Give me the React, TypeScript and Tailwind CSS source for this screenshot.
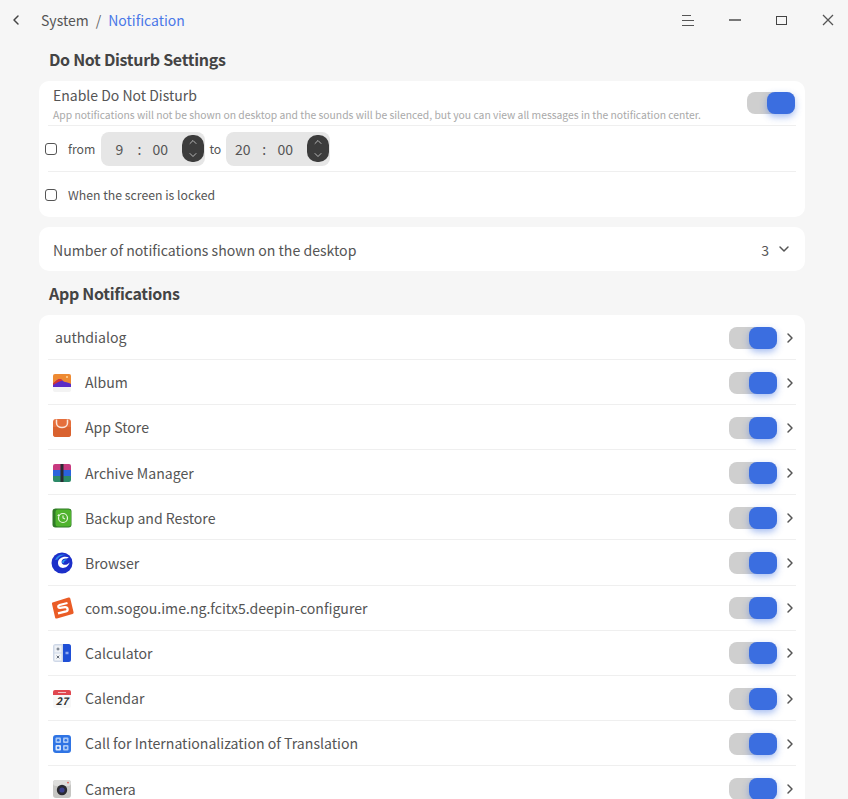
import { ChevronDown, ChevronLeft, ChevronRight, ChevronUp } from 'lucide-react'
import type { ReactNode } from 'react'

function Toggle() {
  return (
    <div className="relative h-[22px] w-[48px] shrink-0 rounded-[8px] bg-[#cfcfcf]">
      <div className="absolute right-0 top-0 h-[22px] w-[28px] rounded-[8px] bg-[#3b6ee0] shadow-[0_3px_7px_rgba(59,110,224,0.45)]" />
    </div>
  )
}

function Checkbox() {
  return <div className="h-[12px] w-[12px] shrink-0 rounded-[3px] border-[1.5px] border-[#555]" />
}

function TimeBox({ hour, hourClass }: { hour: string; hourClass: string }) {
  return (
    <div className="flex h-[34px] w-[104px] items-center rounded-[8px] bg-[#e6e6e6] pr-[1px] text-[14px] text-[#555]">
      <span className={`pt-[2px] text-center ${hourClass}`}>{hour}</span>
      <span className="ml-[2px] w-[4px] pt-[2px] text-center">:</span>
      <span className="ml-[8px] w-[22px] pt-[2px] text-center">00</span>
      <div className="ml-auto flex h-[27px] w-[22px] flex-col items-center justify-center gap-[1px] rounded-[10px] bg-[#3c3c3c] text-[#e8e8e8]">
        <ChevronUp size={12} strokeWidth={1.4} />
        <ChevronDown size={12} strokeWidth={1.4} />
      </div>
    </div>
  )
}

function AlbumIcon() {
  return (
    <svg width="20" height="20" viewBox="0 0 20 20">
      <rect x="1" y="1" width="18" height="18" rx="2" fill="#f3f3f3" />
      <path d="M1 14 V3 a2 2 0 0 1 2 -2 H17 a2 2 0 0 1 2 2 V14 Z" fill="#ee8a32" />
      <path d="M1 14 V10.5 C4 8 6 6 8 6 C10 6 11 9 13 9 C15 9 17 10 19 11 V14 Z" fill="#5b2dc6" />
      <path d="M1 10.5 C4 8 6 6 8 6 C9 6 9.8 6.7 10.5 7.4 C7 8 5 10 1 12 Z" fill="#d9352b" />
      <circle cx="15" cy="4" r="1" fill="#ffd9a0" />
    </svg>
  )
}

function StoreIcon() {
  return (
    <svg width="20" height="20" viewBox="0 0 20 20">
      <rect x="1" y="1" width="18" height="18" rx="3" fill="#e56f3c" />
      <path d="M1 9 H19 V16 a3 3 0 0 1 -3 3 H4 a3 3 0 0 1 -3 -3 Z" fill="#d9622f" />
      <path d="M4.5 1.5 V5 C4.5 11 15.5 11 15.5 5 V1.5" fill="none" stroke="#fbe6da" strokeWidth="1.5" />
    </svg>
  )
}

function ArchiveIcon() {
  return (
    <svg width="20" height="20" viewBox="0 0 20 20">
      <path d="M1 3 a2 2 0 0 1 2 -2 H17 a2 2 0 0 1 2 2 V7 H1 Z" fill="#c7397f" />
      <rect x="1" y="7" width="18" height="6" fill="#2a63dc" />
      <path d="M1 13 H19 V17 a2 2 0 0 1 -2 2 H3 a2 2 0 0 1 -2 -2 Z" fill="#2c8a68" />
      <rect x="8.5" y="1" width="3" height="18" fill="#2b2b33" />
    </svg>
  )
}

function BackupIcon() {
  return (
    <svg width="20" height="20" viewBox="0 0 20 20">
      <rect x="0.5" y="0.5" width="19" height="19" rx="3" fill="#2f7a26" />
      <rect x="3.5" y="1.5" width="15.5" height="17" rx="2.5" fill="#4fb32d" />
      <circle cx="11" cy="10" r="4.5" fill="none" stroke="#e8f6df" strokeWidth="1.2" />
      <path d="M11 7.5 V10 L13 11" fill="none" stroke="#e8f6df" strokeWidth="1.1" />
      <path d="M5.2 8 L6.5 6 L8 8 Z" fill="#e8f6df" />
    </svg>
  )
}

function BrowserIcon() {
  return (
    <svg width="22" height="22" viewBox="0 0 22 22">
      <circle cx="11" cy="11" r="10.5" fill="#1c2fc9" />
      <path d="M4 8 C6 3 11 1.5 15 3 C11 3 8 4.5 6.5 7.5 Z" fill="#2a86ec" />
      <path d="M18 5.5 C13 3.5 7 6 7 11 C7 15.5 12 17.5 16 14.5 C17.5 13.3 18.3 12 18.5 10.5 C16.5 13 13.5 13.5 11.5 12 C9.5 10 11 6.5 14.5 6.5 C16 6.5 17 6 18 5.5 Z" fill="#ffffff" />
      <path d="M11 10 C11.5 8 14 7 16 8 C14.5 8 13 9 13 10.5 C12.8 11.5 11 11.5 11 10 Z" fill="#2a9cf0" />
    </svg>
  )
}

function SogouIcon() {
  return (
    <svg width="24" height="24" viewBox="0 0 24 24">
      <path d="M2.5 6.5 L18.5 1.5 C19.5 1.2 20 1.6 20.3 2.5 L23.5 16 C23.8 17 23.4 17.8 22.5 18 L7 22.5 C6 22.8 5.4 22.4 5.1 21.4 L2 8 C1.8 7.2 2 6.7 2.5 6.5 Z" fill="#ea5c26" />
      <path d="M17.5 7 L9.5 9 C7.5 9.6 8 12 10 11.8 L15 11.2 C18 11 18.5 14.7 16 15.4 L8 17.4" fill="none" stroke="#ffffff" strokeWidth="2.3" />
    </svg>
  )
}

function CalculatorIcon() {
  return (
    <svg width="20" height="20" viewBox="0 0 20 20">
      <rect x="1" y="1" width="18" height="18" rx="2.5" fill="#cfd8e8" />
      <rect x="2.5" y="2.5" width="7" height="7" fill="#eef1f6" />
      <rect x="2.5" y="10.5" width="7" height="7" fill="#f3f5f8" />
      <path d="M11 1 H16.5 A2.5 2.5 0 0 1 19 3.5 V16.5 A2.5 2.5 0 0 1 16.5 19 H11 Z" fill="#1f4fd6" />
      <path d="M4.5 6 H7.5 M6 4.5 V7.5 M4.7 12.7 L7.3 15.3 M7.3 12.7 L4.7 15.3" stroke="#56606e" strokeWidth="0.9" />
      <path d="M13.5 9.3 H16.5 M13.5 10.7 H16.5" stroke="#cfdcff" strokeWidth="0.8" />
    </svg>
  )
}

function CalendarIcon() {
  return (
    <svg width="20" height="20" viewBox="0 0 20 20">
      <rect x="1" y="1" width="18" height="18" rx="2" fill="#f8f8f8" />
      <path d="M1 6 V3 a2 2 0 0 1 2 -2 H17 a2 2 0 0 1 2 2 V6 Z" fill="#e0474f" />
      <rect x="6" y="3" width="8" height="1" fill="#f6c3c5" />
      <text x="10" y="15.8" textAnchor="middle" fontSize="10.5" fontWeight="700" fontStyle="italic" fill="#333">27</text>
    </svg>
  )
}

function TranslateIcon() {
  return (
    <svg width="20" height="20" viewBox="0 0 20 20">
      <rect x="1" y="1" width="18" height="18" rx="3" fill="#2f74e4" />
      <rect x="3.5" y="3.5" width="5.5" height="5.5" rx="1" fill="#a9c8f6" />
      <rect x="11" y="3.5" width="5.5" height="5.5" rx="1" fill="#a9c8f6" />
      <rect x="3.5" y="11" width="5.5" height="5.5" rx="1" fill="#dbe8fb" />
      <rect x="11" y="11" width="5.5" height="5.5" rx="1" fill="#a9c8f6" />
      <circle cx="6.2" cy="6.2" r="1.3" fill="#2f74e4" />
      <circle cx="13.8" cy="6.2" r="1.3" fill="#2f74e4" />
      <circle cx="6.2" cy="13.8" r="1.3" fill="#2f74e4" />
      <circle cx="13.8" cy="13.8" r="1.3" fill="#2f74e4" />
    </svg>
  )
}

function CameraIcon() {
  return (
    <svg width="20" height="20" viewBox="0 0 20 20">
      <rect x="1" y="1" width="18" height="18" rx="3" fill="#c6c6c3" />
      <rect x="1" y="1" width="18" height="6" rx="3" fill="#dededc" />
      <circle cx="10" cy="11" r="5.2" fill="#2a2a30" />
      <circle cx="10" cy="11" r="2.6" fill="#3a3f8f" />
      <circle cx="16" cy="3.6" r="0.9" fill="#e0584f" />
    </svg>
  )
}

function AppRow({ icon, label, last }: { icon?: ReactNode; label: string; last?: boolean }) {
  return (
    <div className={`flex h-[45.1px] items-center pt-[1.5px] ${last ? '' : 'border-b border-[#efefef]'}`}>
      {icon ? (
        <>
          <div className="flex w-[27px] shrink-0 justify-center">{icon}</div>
          <span className="ml-[10px] text-[14.1px] text-[#555]">{label}</span>
        </>
      ) : (
        <span className="ml-[7px] text-[14.1px] text-[#555]">{label}</span>
      )}
      <div className="ml-auto flex items-center">
        <Toggle />
        <ChevronRight size={16} strokeWidth={2.2} className="ml-[5px] mr-[-2px] text-[#555]" />
      </div>
    </div>
  )
}

const apps: { label: string; icon?: ReactNode }[] = [
  { label: 'authdialog' },
  { label: 'Album', icon: <AlbumIcon /> },
  { label: 'App Store', icon: <StoreIcon /> },
  { label: 'Archive Manager', icon: <ArchiveIcon /> },
  { label: 'Backup and Restore', icon: <BackupIcon /> },
  { label: 'Browser', icon: <BrowserIcon /> },
  { label: 'com.sogou.ime.ng.fcitx5.deepin-configurer', icon: <SogouIcon /> },
  { label: 'Calculator', icon: <CalculatorIcon /> },
  { label: 'Calendar', icon: <CalendarIcon /> },
  { label: 'Call for Internationalization of Translation', icon: <TranslateIcon /> },
  { label: 'Camera', icon: <CameraIcon /> },
]

export default function App() {
  return (
    <div className="h-[799px] w-[848px] overflow-hidden bg-[#f6f6f6] font-['Noto_Sans_CJK_SC','Noto_Sans',sans-serif] text-[#555]">
      {/* Title bar */}
      <div className="flex h-[40px] items-center">
        <ChevronLeft size={16} strokeWidth={2.2} className="ml-[8px] text-[#444]" />
        <span className="ml-[17px] text-[14px] text-[#555]">System</span>
        <span className="ml-[7px] text-[14px] text-[#666]">/</span>
        <span className="ml-[7px] text-[14px] text-[#4a78e8]">Notification</span>
        <div className="ml-auto flex items-center text-[#555]">
          <div className="flex w-[12px] flex-col gap-[4px]">
            <div className="h-px w-[9px] bg-[#555]" />
            <div className="h-px w-[12px] bg-[#555]" />
            <div className="h-px w-[12px] bg-[#555]" />
          </div>
          <div className="ml-[35px] h-[1.5px] w-[12px] bg-[#777]" />
          <div className="ml-[35px] h-[9px] w-[11px] border-[1.3px] border-[#444]" />
          <svg width="12" height="12" viewBox="0 0 12 12" className="ml-[35px] mr-[14px]">
            <path d="M1 1 L11 11 M11 1 L1 11" stroke="#555" strokeWidth="1.3" />
          </svg>
        </div>
      </div>

      <div className="mx-[39px] w-[766px]">
        <h2 className="ml-[10px] flex h-[41px] items-center pb-[3px] text-[16px] font-bold tracking-[-0.3px] text-[#444]">Do Not Disturb Settings</h2>

        <div className="h-[136px] rounded-[10px] bg-white px-[9px]">
          <div className="relative h-[45px] border-b border-[#efefef] pl-[5px]">
            <div className="pt-[4px] text-[14px] leading-[21px] text-[#555]">Enable Do Not Disturb</div>
            <div className="mt-[1px] whitespace-nowrap text-[10.34px] leading-[15px] text-[#a9a9a9]">
              App notifications will not be shown on desktop and the sounds will be silenced, but you can view all messages in the notification center.
            </div>
            <div className="absolute right-[1px] top-[11px]">
              <Toggle />
            </div>
          </div>
          <div className="flex h-[46px] items-center border-b border-[#efefef]">
            <div className="-ml-[3px]"><Checkbox /></div>
            <span className="ml-[11px] pt-[2px] text-[12.25px]">from</span>
            <div className="ml-[6px]"><TimeBox hour="9" hourClass="ml-[2px] w-[32px]" /></div>
            <span className="ml-[4px] pt-[2px] text-[12.25px]">to</span>
            <div className="ml-[5px]"><TimeBox hour="20" hourClass="ml-[-1px] w-[35px]" /></div>
          </div>
          <div className="flex h-[45px] items-center">
            <div className="-ml-[3px]"><Checkbox /></div>
            <span className="ml-[11px] pt-[2px] text-[12.25px]">When the screen is locked</span>
          </div>
        </div>

        <div className="mt-[10px] flex h-[44px] items-center rounded-[10px] bg-white pl-[14px] pr-[14px]">
          <span className="pt-[3px] text-[14.1px]">Number of notifications shown on the desktop</span>
          <span className="ml-auto pt-[3px] text-[14.1px]">3</span>
          <ChevronDown size={16} strokeWidth={2.2} className="ml-[7px] mr-[-1px]" />
        </div>

        <h2 className="ml-[10px] flex h-[44px] items-center pb-px text-[16px] font-bold tracking-[-0.3px] text-[#444]">App Notifications</h2>

        <div className="rounded-t-[10px] bg-white px-[9px]">
          {apps.map((a, i) => (
            <AppRow key={a.label} label={a.label} icon={a.icon} last={i === apps.length - 1} />
          ))}
        </div>
      </div>
    </div>
  )
}
